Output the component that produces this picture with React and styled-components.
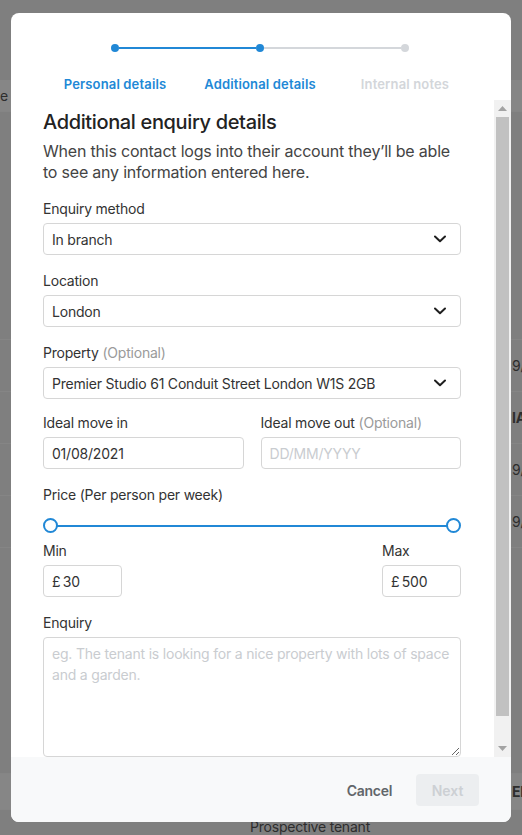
import React from 'react';
import styled, { createGlobalStyle } from 'styled-components';

const GlobalStyle = createGlobalStyle`
  html, body {
    margin: 0;
    padding: 0;
    height: 100%;
  }
  body {
    font-family: Inter, 'Noto Sans', sans-serif;
    letter-spacing: -0.013em;
    background: #7f7f7f;
    overflow: hidden;
  }
  * {
    box-sizing: border-box;
  }
`;

const Screen = styled.div`
  position: relative;
  width: 100vw;
  height: 100vh;
  overflow: hidden;
`;

/* dimmed page that sits behind the dialog */
const DimmedPage = styled.div`
  position: absolute;
  inset: 0;
  padding-top: 80px;
  color: #2d2d2d;
  font-size: 14px;
`;

const PageRow = styled.div`
  display: grid;
  grid-template-columns: 250px 262px 1fr;
  align-items: center;
  height: ${(p) => p.$h || 52}px;
  background: ${(p) => (p.$light ? '#868686' : 'transparent')};
  border-bottom: 1px solid #858585;
  font-weight: ${(p) => (p.$bold ? 700 : 400)};
  white-space: nowrap;
`;

const Overlay = styled.div`
  position: absolute;
  inset: 0;
  padding: 13px 11px;
  display: flex;
  justify-content: center;
  align-items: flex-start;
`;

const Modal = styled.div`
  width: 500px;
  height: 809px;
  background: #fff;
  border-radius: 8px;
  overflow: hidden;
  display: flex;
  flex-direction: column;
`;

const Header = styled.div`
  padding: 31px 0 8px;
`;

const Track = styled.div`
  display: flex;
  align-items: center;
  justify-content: center;
  margin-left: -2px;
`;

const Dot = styled.span`
  width: 8px;
  height: 8px;
  border-radius: 50%;
  background: ${(p) => (p.$done ? '#2188d6' : '#d4d7db')};
`;

const Segment = styled.span`
  width: 137px;
  height: 2px;
  background: ${(p) => (p.$done ? '#2188d6' : '#d4d7db')};
`;

const StepLabels = styled.div`
  display: grid;
  grid-template-columns: repeat(3, 145px);
  justify-content: center;
  margin: 24px 0 0 -2px;
`;

const StepLabel = styled.span`
  text-align: center;
  white-space: nowrap;
  font-size: 13px;
  line-height: 16px;
  font-weight: 600;
  letter-spacing: 0.15px;
  color: ${(p) => (p.$active ? '#2188d6' : '#d3d6da')};
`;

const Body = styled.div`
  flex: 1;
  min-height: 0;
  display: flex;
`;

const Scroll = styled.div`
  flex: 1;
  min-width: 0;
  overflow: hidden;
  padding: 9px 33px 26px 32px;
`;

/* classic scrollbar, drawn */
const Rail = styled.div`
  width: 17px;
  flex-shrink: 0;
  background: #f1f1f1;
  display: flex;
  flex-direction: column;
  align-items: center;
`;

const RailArrow = styled.div`
  height: 17px;
  width: 100%;
  display: flex;
  align-items: center;
  justify-content: center;
`;

const Thumb = styled.div`
  width: 13px;
  flex: 1;
  background: #c1c1c1;
  margin-bottom: 24px;
`;

const Title = styled.h2`
  margin: 0;
  font-size: 20px;
  line-height: 26px;
  font-weight: 500;
  letter-spacing: -0.018em;
  color: #222;
`;

const Intro = styled.p`
  margin: 6px 0 16px;
  font-size: 16px;
  line-height: 21px;
  color: #444;
`;

const Field = styled.div`
  display: flex;
  flex-direction: column;
  margin-bottom: ${(p) => (p.$mb !== undefined ? p.$mb : 16)}px;
`;

const Label = styled.label`
  font-size: 14px;
  line-height: 20px;
  color: #333;
  margin-bottom: 4px;
`;

const Optional = styled.span`
  color: #9a9a9a;
`;

const Box = styled.div`
  height: 32px;
  border: 1px solid #d6d6d6;
  border-radius: 4px;
  display: flex;
  align-items: center;
  justify-content: space-between;
  padding: 0 14px 0 8px;
  font-size: 14px;
  color: ${(p) => (p.$placeholder ? '#c9ccd0' : '#333')};
  background: #fff;
  white-space: nowrap;
`;

const Row = styled.div`
  display: flex;
  justify-content: space-between;
  gap: 17px;
  margin-top: -2px;
  & > * {
    flex: 1;
  }
`;

const RangeRow = styled.div`
  display: flex;
  justify-content: space-between;
`;

const Slider = styled.div`
  position: relative;
  height: 15px;
  margin: 9px 0 8px;
  display: flex;
  align-items: center;
`;

const SliderBar = styled.div`
  position: absolute;
  left: 8px;
  right: 8px;
  height: 2px;
  background: #2188d6;
`;

const Handle = styled.span`
  position: absolute;
  top: 0;
  ${(p) => (p.$end ? 'right: 0;' : 'left: 0;')}
  width: 15px;
  height: 15px;
  border-radius: 50%;
  border: 2px solid #2188d6;
  background: #fff;
`;

const Money = styled(Box)`
  width: 79px;
  padding-left: 8px;
`;

const TextArea = styled.textarea`
  height: 120px;
  border: 1px solid #d6d6d6;
  border-radius: 4px;
  padding: 5px 8px;
  font-family: inherit;
  font-size: 14px;
  line-height: 21px;
  letter-spacing: -0.2px;
  color: #333;
  outline: none;
  resize: vertical;
  &::placeholder {
    color: #c9ccd0;
  }
`;

const Footer = styled.div`
  height: 65px;
  flex-shrink: 0;
  background: #f8f9fa;
  display: flex;
  align-items: center;
  justify-content: flex-end;
  gap: 24px;
  padding: 1px 32px 0 0;
`;

const CancelButton = styled.button`
  border: none;
  background: none;
  padding: 0;
  font-family: inherit;
  font-size: 14px;
  font-weight: 600;
  letter-spacing: -0.3px;
  color: #62666a;
`;

const NextButton = styled.button`
  width: 63px;
  height: 32px;
  border: none;
  border-radius: 4px;
  background: #eceef0;
  font-family: inherit;
  font-size: 14px;
  font-weight: 600;
  color: #cdd0d4;
`;

const Chevron = () => (
  <svg width="12" height="8" viewBox="0 0 12 8" fill="none">
    <path d="M1 1.5 L6 6.2 L11 1.5" stroke="#1f1f1f" strokeWidth="2" strokeLinecap="round" strokeLinejoin="round" />
  </svg>
);

const Arrow = ({ down }) => (
  <svg width="9" height="5" viewBox="0 0 9 5">
    <path d={down ? 'M0 0 H9 L4.5 5 Z' : 'M0 5 H9 L4.5 0 Z'} fill="#a3a3a3" />
  </svg>
);

const Select = ({ value }) => (
  <Box>
    <span>{value}</span>
    <Chevron />
  </Box>
);

const App = () => {
  return (
    <Screen>
      <GlobalStyle />
      <DimmedPage>
        <PageRow $h={32} $light>
          <span>e</span>
        </PageRow>
        <PageRow $h={228} />
        <PageRow><span /><span /><span>9/</span></PageRow>
        <PageRow $bold><span /><span /><span>IA</span></PageRow>
        <PageRow><span /><span /><span>9/</span></PageRow>
        <PageRow><span /><span /><span>9/</span></PageRow>
        <PageRow $h={226} />
        <PageRow $h={36} $light $bold><span /><span /><span>EF</span></PageRow>
        <PageRow $h={34}><span /><span>Prospective tenant</span></PageRow>
      </DimmedPage>
      <Overlay>
        <Modal>
          <Header>
            <Track>
              <Dot $done />
              <Segment $done />
              <Dot $done />
              <Segment />
              <Dot />
            </Track>
            <StepLabels>
              <StepLabel $active>Personal details</StepLabel>
              <StepLabel $active>Additional details</StepLabel>
              <StepLabel>Internal notes</StepLabel>
            </StepLabels>
          </Header>

          <Body>
            <Scroll>
              <Title>Additional enquiry details</Title>
              <Intro>
                When this contact logs into their account they’ll be able to see any information entered here.
              </Intro>

              <Field>
                <Label>Enquiry method</Label>
                <Select value="In branch" />
              </Field>

              <Field>
                <Label>Location</Label>
                <Select value="London" />
              </Field>

              <Field>
                <Label>
                  Property <Optional>(Optional)</Optional>
                </Label>
                <Select value="Premier Studio 61 Conduit Street London W1S 2GB" />
              </Field>

              <Row>
                <Field>
                  <Label>Ideal move in</Label>
                  <Box>01/08/2021</Box>
                </Field>
                <Field>
                  <Label>
                    Ideal move out <Optional>(Optional)</Optional>
                  </Label>
                  <Box $placeholder>DD/MM/YYYY</Box>
                </Field>
              </Row>

              <Field $mb={0}>
                <Label>Price (Per person per week)</Label>
              </Field>
              <Slider>
                <SliderBar />
                <Handle />
                <Handle $end />
              </Slider>
              <RangeRow>
                <Field>
                  <Label>Min</Label>
                  <Money>£{'\u2009'}30</Money>
                </Field>
                <Field>
                  <Label>Max</Label>
                  <Money>£{'\u2009'}500</Money>
                </Field>
              </RangeRow>

              <Field $mb={0}>
                <Label>Enquiry</Label>
                <TextArea placeholder="eg. The tenant is looking for a nice property with lots of space and a garden." />
              </Field>
            </Scroll>
            <Rail>
              <RailArrow><Arrow /></RailArrow>
              <Thumb />
              <RailArrow><Arrow down /></RailArrow>
            </Rail>
          </Body>

          <Footer>
            <CancelButton>Cancel</CancelButton>
            <NextButton disabled>Next</NextButton>
          </Footer>
        </Modal>
      </Overlay>
    </Screen>
  );
};

export default App;
